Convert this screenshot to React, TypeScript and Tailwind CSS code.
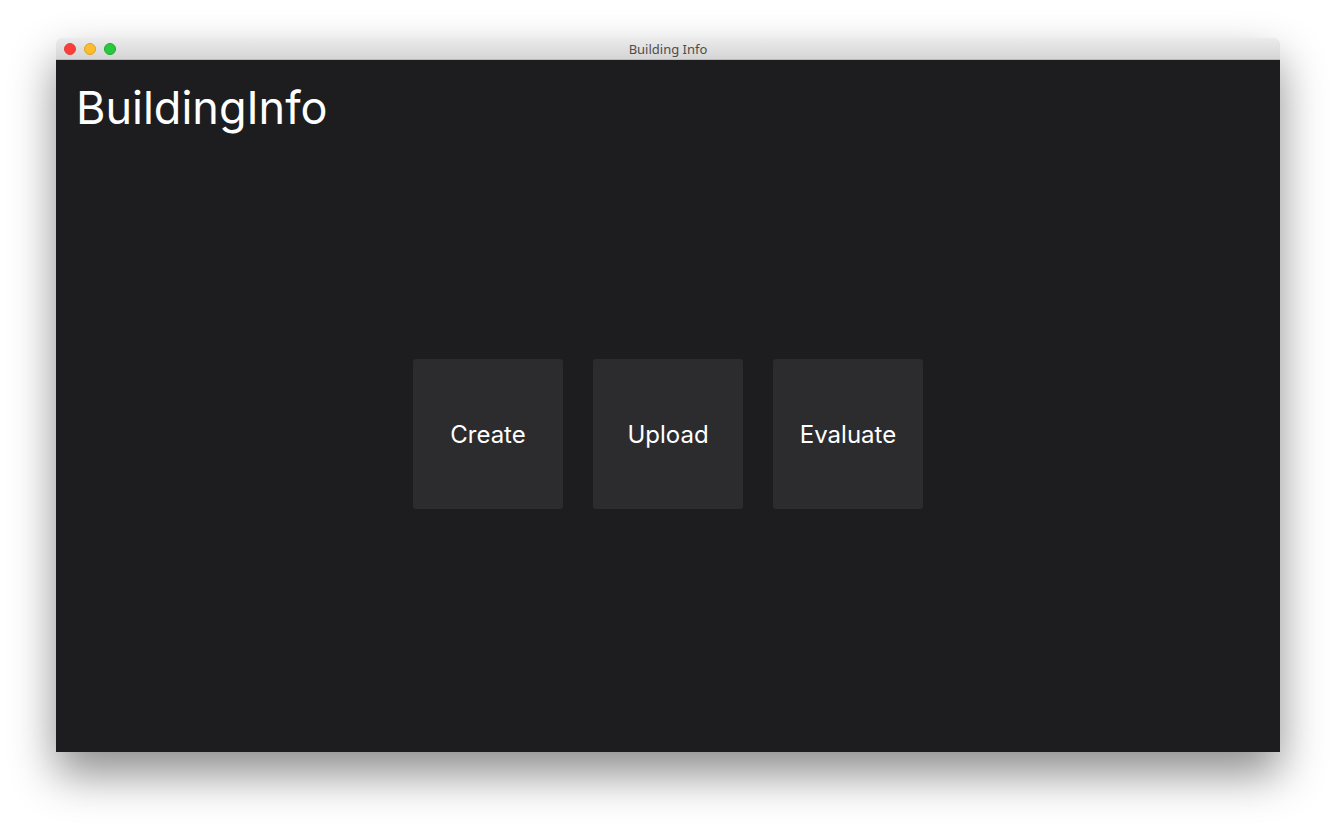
import React from "react";

export default function App() {
  const btns = ["Create", "Upload", "Evaluate"];
  return (
    <div className="w-[1336px] h-[826px] bg-white overflow-hidden" style={{ fontFamily: "Inter, 'Noto Sans', sans-serif" }}>
      <div className="pt-[38px] pl-[56px]">
        <div className="w-[1224px] h-[714px] flex flex-col rounded-t-[5px] shadow-[0_22px_45px_rgba(0,0,0,0.45)] overflow-hidden">
          <div className="h-[22px] shrink-0 relative flex items-center justify-center bg-gradient-to-b from-[#ebebeb] to-[#d5d5d5] border-b border-[#b9b9b9] rounded-t-[5px]">
            <div className="absolute left-[8px] top-[5px] flex gap-[8px]">
              <div className="w-[12px] h-[12px] rounded-full bg-[#fc3d39] border border-[#e0443e]" />
              <div className="w-[12px] h-[12px] rounded-full bg-[#fdbc2c] border border-[#dea123]" />
              <div className="w-[12px] h-[12px] rounded-full bg-[#28c840] border border-[#1aab29]" />
            </div>
            <span className="text-[13px] text-[#4d4d4d] pt-[2px]" style={{ fontFamily: "'Noto Sans', Inter, sans-serif" }}>Building Info</span>
          </div>
          <div className="flex-1 bg-[#1d1d1f] flex flex-col">
            <div className="pl-[20px] pt-[23px] text-[45px] leading-[50px] text-white">BuildingInfo</div>
            <div className="flex-1 flex items-start justify-center gap-[30px] pt-[226px]">
              {btns.map((b) => (
                <div key={b} className="w-[150px] h-[150px] rounded-[3px] bg-[#2c2c2e] flex items-center justify-center text-white text-[24px] pt-[2px]">
                  {b}
                </div>
              ))}
            </div>
          </div>
        </div>
      </div>
    </div>
  );
}
